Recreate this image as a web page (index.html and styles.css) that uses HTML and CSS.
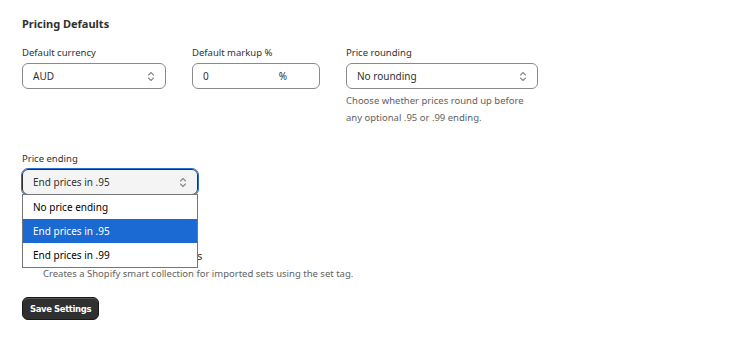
FILE: index.html
```html
<!DOCTYPE html>
<html lang="en">
<head>
<meta charset="UTF-8">
<meta name="viewport" content="width=device-width, initial-scale=1.0">
<title>Pricing Defaults</title>
<link rel="stylesheet" href="styles.css">
</head>
<body>

<div class="page">
  <h2 class="section-title">Pricing Defaults</h2>

  <!-- Top row of fields -->
  <div class="field-row">
    <div class="field currency">
      <label>Default currency</label>
      <div class="select">
        <span>AUD</span>
        <svg class="chev" width="8" height="11" viewBox="0 0 8 11"><path d="M1.5 4 L4 1.5 L6.5 4 M1.5 7 L4 9.5 L6.5 7" fill="none" stroke="#8a8a8a" stroke-width="1.1" stroke-linecap="round" stroke-linejoin="round"/></svg>
      </div>
    </div>
    <div class="field markup">
      <label>Default markup %</label>
      <div class="input">
        <span>0</span>
        <span class="suffix">%</span>
      </div>
    </div>
    <div class="field rounding">
      <label>Price rounding</label>
      <div class="select">
        <span>No rounding</span>
        <svg class="chev" width="8" height="11" viewBox="0 0 8 11"><path d="M1.5 4 L4 1.5 L6.5 4 M1.5 7 L4 9.5 L6.5 7" fill="none" stroke="#8a8a8a" stroke-width="1.1" stroke-linecap="round" stroke-linejoin="round"/></svg>
      </div>
      <p class="help">Choose whether prices round up before any optional .95 or .99 ending.</p>
    </div>
  </div>

  <!-- Price ending, dropdown open -->
  <div class="field ending">
    <label>Price ending</label>
    <div class="select-wrap">
      <div class="select focused">
        <span>End prices in .95</span>
        <svg class="chev" width="8" height="11" viewBox="0 0 8 11"><path d="M1.5 4 L4 1.5 L6.5 4 M1.5 7 L4 9.5 L6.5 7" fill="none" stroke="#8a8a8a" stroke-width="1.1" stroke-linecap="round" stroke-linejoin="round"/></svg>
      </div>
      <ul class="dropdown">
        <li>No price ending</li>
        <li class="active">End prices in .95</li>
        <li>End prices in .99</li>
      </ul>
    </div>
  </div>

  <div class="check-row">
    <span class="checkbox"></span>
    <span>Create Shopify smart collections</span>
  </div>
  <p class="check-help">Creates a Shopify smart collection for imported sets using the set tag.</p>

  <button class="save-button">Save Settings</button>
</div>

</body>
</html>
```

FILE: styles.css
```css
body {
  margin: 0;
  background: #fff;
  font-family: "Noto Sans", "Open Sans", sans-serif;
  color: #303030;
}
.page {
  padding: 16px 22px;
}
.section-title {
  font-size: 11px;
  font-weight: bold;
  margin: 0 0 15px 0;
  color: #303030;
}
.field-row {
  display: flex;
  gap: 26px;
}
.field label {
  display: block;
  font-size: 9.5px;
  margin-bottom: 4px;
}
.select, .input {
  height: 26px;
  box-sizing: border-box;
  border: 1px solid #8a8a8a;
  border-radius: 6px;
  display: flex;
  align-items: center;
  justify-content: space-between;
  padding: 0 10px;
  font-size: 10px;
  color: #303030;
  background: #fff;
}
.currency .select {
  width: 144px;
}
.markup .input {
  width: 128px;
  padding-right: 32px;
}
.rounding .select {
  width: 192px;
}
.help {
  font-size: 9.5px;
  line-height: 17px;
  color: #616161;
  margin: 3px 0 0 0;
  width: 192px;
}
/* Price ending */
.ending {
  margin-top: 26px;
}
.select-wrap {
  position: relative;
  width: 176px;
}
.select.focused {
  border: 1px solid #303030;
  outline: 1px solid #2c6ecb;
  background: #f4f4f4;
}
.dropdown {
  position: absolute;
  top: 25px;
  left: 0;
  width: 176px;
  box-sizing: border-box;
  list-style: none;
  margin: 0;
  padding: 0;
  background: #fff;
  border: 1px solid #767676;
  z-index: 2;
}
.dropdown li {
  height: 24px;
  line-height: 24px;
  padding-left: 10px;
  font-size: 10px;
  color: #000;
}
.dropdown li.active {
  background: #1b6ad4;
  color: #fff;
}
.check-row {
  display: flex;
  align-items: center;
  gap: 8px;
  margin-top: 54px;
  font-size: 10.5px;
}
.checkbox {
  width: 12px;
  height: 12px;
  border: 1px solid #8a8a8a;
  border-radius: 3px;
}
.check-help {
  margin: 4px 0 0 21px;
  font-size: 9.5px;
  color: #616161;
}
.save-button {
  margin-top: 17px;
  background: #303030;
  color: #fff;
  border: 1px solid #1a1a1a;
  border-radius: 6px;
  height: 23px;
  padding: 0 7px;
  font-family: "DejaVu Sans", sans-serif;
  font-size: 8.5px;
  font-weight: bold;
  letter-spacing: -0.4px;
  box-shadow: inset 0 1px 0 #555;
}
```
